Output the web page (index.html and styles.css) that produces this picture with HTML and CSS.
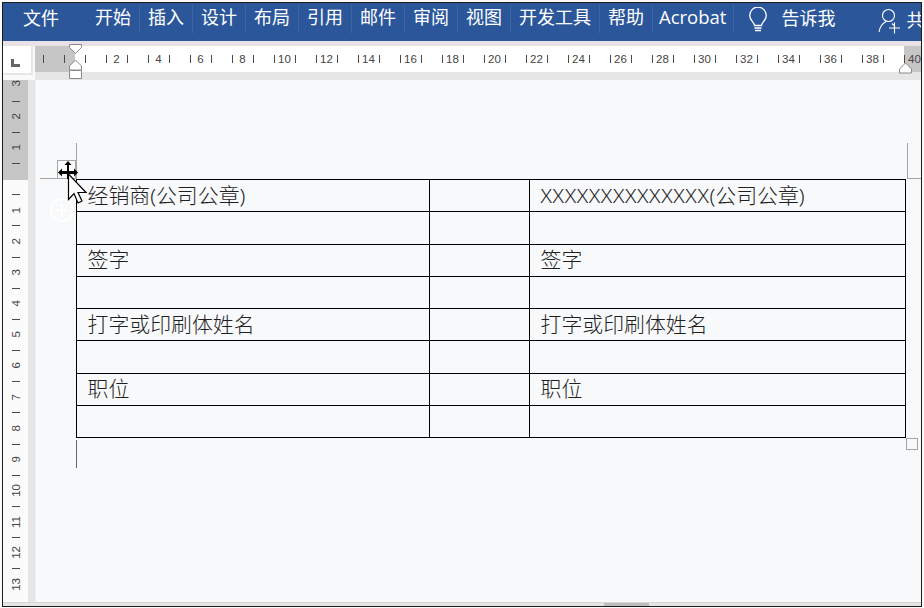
FILE: index.html
```html
<!DOCTYPE html>
<html lang="zh-CN">
<head>
<meta charset="utf-8">
<title>Word</title>
<link rel="stylesheet" href="styles.css">
</head>
<body>
<div class="frame">
  <header class="ribbon">
    <span class="file-tab">文件</span>
    <span class="tab">开始</span>
    <span class="tab">插入</span>
    <span class="tab">设计</span>
    <span class="tab">布局</span>
    <span class="tab">引用</span>
    <span class="tab">邮件</span>
    <span class="tab">审阅</span>
    <span class="tab">视图</span>
    <span class="tab">开发工具</span>
    <span class="tab">帮助</span>
    <span class="tab tab-latin">Acrobat</span>
    <svg class="bulb" width="20" height="26" viewBox="0 0 20 26" fill="none" stroke="#fff" stroke-width="1.3">
      <path d="M6.5 18.5c0-3-4.800-4.800-4.800-10a8.200 8.200 0 0 1 16.600 0c0 5.200-4.800 7-4.800 10z"/>
      <path d="M6.500 21h7M7 23.500h6"/>
    </svg>
    <span class="tell">告诉我</span>
    <svg class="user" width="24" height="26" viewBox="0 0 24 26" fill="none" stroke="#fff" stroke-width="1.100">
      <circle cx="10.500" cy="7.500" r="6"/>
      <path d="M1 24c1-5.500 4-9 7-10.500M14 15.500l2 2M11 20h11M16.500 14.500v11"/>
    </svg>
    <span class="share">共</span>
  </header>
  <div class="ribbon-edge"></div>
  <main class="work">
    <div class="corner"><span class="tab-stop"></span></div>
    <div class="hruler-wrap">
      <div class="hruler">
        <span class="hc"></span><span class="hc"></span><span class="hc"></span>
        <span class="hc">2</span><span class="hc"></span>
        <span class="hc">4</span><span class="hc"></span>
        <span class="hc">6</span><span class="hc"></span>
        <span class="hc">8</span><span class="hc"></span>
        <span class="hc">10</span><span class="hc"></span>
        <span class="hc">12</span><span class="hc"></span>
        <span class="hc">14</span><span class="hc"></span>
        <span class="hc">16</span><span class="hc"></span>
        <span class="hc">18</span><span class="hc"></span>
        <span class="hc">20</span><span class="hc"></span>
        <span class="hc">22</span><span class="hc"></span>
        <span class="hc">24</span><span class="hc"></span>
        <span class="hc">26</span><span class="hc"></span>
        <span class="hc">28</span><span class="hc"></span>
        <span class="hc">30</span><span class="hc"></span>
        <span class="hc">32</span><span class="hc"></span>
        <span class="hc">34</span><span class="hc"></span>
        <span class="hc">36</span><span class="hc"></span>
        <span class="hc">38</span><span class="hc"></span>
        <span class="hc">40</span>
      </div>
      <svg class="indent-left" width="15" height="38" viewBox="0 0 15 38" fill="#fff" stroke="#8a8a8a">
        <path d="M1.500 1.500h12v3l-6 6-6-6z"/>
        <path d="M7.500 17l6 6v4h-12v-4z"/>
        <path d="M1.500 27.500h12v8h-12z"/>
      </svg>
      <svg class="indent-right" width="15" height="12" viewBox="0 0 15 12" fill="#fff" stroke="#8a8a8a">
        <path d="M7.500 1l6 6v4h-12v-4z"/>
      </svg>
    </div>
    <aside class="vside">
      <div class="vruler">
        <span class="vc vc-first"><b>3</b></span>
        <span class="vc"><b>2</b></span>
        <span class="vc"><b>1</b></span>
        <span class="vc"></span>
        <span class="vc"><b>1</b></span>
        <span class="vc"><b>2</b></span>
        <span class="vc"><b>3</b></span>
        <span class="vc"><b>4</b></span>
        <span class="vc"><b>5</b></span>
        <span class="vc"><b>6</b></span>
        <span class="vc"><b>7</b></span>
        <span class="vc"><b>8</b></span>
        <span class="vc"><b>9</b></span>
        <span class="vc"><b>10</b></span>
        <span class="vc"><b>11</b></span>
        <span class="vc"><b>12</b></span>
        <span class="vc"><b>13</b></span>
      </div>
      <div class="vband"></div>
    </aside>
    <section class="doc">
      <table class="sign">
        <colgroup><col class="c1"><col class="c2"><col class="c3"></colgroup>
        <tr><td>经销商(公司公章)</td><td></td><td><span class="xs">XXXXXXXXXXXXXX</span>(公司公章)</td></tr>
        <tr><td></td><td></td><td></td></tr>
        <tr><td>签字</td><td></td><td>签字</td></tr>
        <tr><td></td><td></td><td></td></tr>
        <tr><td>打字或印刷体姓名</td><td></td><td>打字或印刷体姓名</td></tr>
        <tr><td></td><td></td><td></td></tr>
        <tr><td>职位</td><td></td><td>职位</td></tr>
        <tr><td></td><td></td><td></td></tr>
      </table>
      <i class="mark mark-tl-v"></i>
      <i class="mark mark-tl-h"></i>
      <i class="mark mark-tr-v"></i>
      <i class="mark mark-tr-h"></i>
      <i class="mark mark-bl-v"></i>
      <i class="handle-move"></i>
      <i class="handle-size"></i>
      <svg class="ghost" width="26" height="26" viewBox="0 0 26 26" fill="none" stroke="#fff" stroke-width="2">
        <circle cx="13" cy="13" r="11"/>
        <path d="M13 7v12M7 13h12"/>
      </svg>
      <svg class="cursor" width="32" height="50" viewBox="0 0 32 50">
        <path d="M12 1l-3.500 4h2.500v6h-5v-2.500l-4 4 4 4v-2.500h5v5h2v-5h5v2.500l4-4-4-4v2.500h-5v-6h2.500z" fill="#000"/>
        <path d="M12.500 14v25.500l5.500-6 4 9.500 4-2-4-8.500h8z" fill="#fff" stroke="#000" stroke-width="1.200"/>
      </svg>
    </section>
  </main>
  <footer class="hscroll"><span class="thumb"></span></footer>
</div>
</body>
</html>
```
FILE: styles.css
```css
* { box-sizing: border-box; }
html, body { margin: 0; padding: 0; }
body {
  width: 924px;
  height: 608px;
  padding: 2px 2px 1px 2px;
  background: #fafafa;
  overflow: hidden;
  font-family: "Noto Sans", "Noto Sans CJK SC", sans-serif;
}
.frame {
  width: 920px;
  height: 605px;
  border: 1px solid #1c1c1c;
  background: #f8f9fb;
  display: flex;
  flex-direction: column;
  overflow: hidden;
}
.ribbon {
  flex: 0 0 38px;
  height: 38px;
  min-height: 0;
  background: #2b579a;
  color: #fff;
  display: flex;
  align-items: center;
  font-size: 18px;
  line-height: 30px;
  white-space: nowrap;
  overflow: hidden;
}
.ribbon > * { flex: none; }
.file-tab { width: 84px; padding-left: 20px; margin-top: -8px; }
.tab {
  padding: 0 8px;
  border-right: 1px solid #3d68a8;
  height: 28px;
  line-height: 24px;
  margin-top: -6px;
}
.tab-latin { padding: 0 7px 0 6px; font-family: "Open Sans", sans-serif; font-size: 18.500px; font-weight: 500; }
.bulb { margin-left: 14px; margin-top: -4px; }
.tell { margin-left: 13px; margin-top: -8px; }
.user { margin-left: 43px; margin-top: -2px; }
.share { margin-left: 4px; margin-top: -4px; }
.ribbon-edge { flex: 0 0 5px; background: #e8e2e6; }
.work {
  flex: 1;
  min-height: 0;
  display: grid;
  grid-template-columns: 32px 1fr;
  grid-template-rows: 34px 1fr;
}
.corner {
  height: 29px;
  margin-right: 2px;
  padding: 7px 0 0 8px;
  border-right: 2px solid #e6e6e6;
  border-bottom: 2px solid #e6e6e6;
  display: flex;
  align-items: center;
  background: #fff;
}
.tab-stop {
  width: 9px;
  height: 8px;
  border-left: 3px solid #666;
  border-bottom: 3px solid #666;
}
.hruler-wrap {
  position: relative;
  background: #e6e6e6;
}
.hruler {
  height: 26px;
  padding-left: 8px;
  display: flex;
  overflow: hidden;
  background: linear-gradient(to right, #c6c6c6 40px, #fff 40px, #fff 869px, #c6c6c6 869px);
  font-family: "Liberation Sans", sans-serif;
  font-size: 11.500px;
  color: #444;
}
.hc {
  flex: 0 0 21px;
  height: 26px;
  line-height: 26px;
  text-align: center;
  background: linear-gradient(#4a4a4a, #4a4a4a) left center / 1px 8px no-repeat;
}
.indent-left { position: absolute; left: 33px; top: -3px; }
.indent-right { position: absolute; left: 863px; top: 16px; }
.vside { display: flex; min-height: 0; overflow: hidden; }
.vruler {
  flex: 0 0 25px;
  background: linear-gradient(to bottom, #c6c6c6 100px, #fbfbfb 100px);
  display: flex;
  flex-direction: column;
  font-family: "Liberation Sans", sans-serif;
  font-size: 11.500px;
  color: #444;
  overflow: hidden;
}
.vc {
  flex: 0 0 31.200px;
  display: flex;
  align-items: center;
  justify-content: center;
  background: linear-gradient(#4a4a4a, #4a4a4a) center top / 8px 1px no-repeat;
}
.vc-first { flex-basis: 20.600px; background: none; align-items: flex-start; }
.vc b {
  font-weight: 400;
  writing-mode: vertical-rl;
  transform: rotate(180deg);
  line-height: 14px;
}
.vband { flex: 0 0 7px; background: #e6e6e6; }
.doc {
  position: relative;
  min-height: 0;
  padding: 99px 0 0 40px;
  background: #f8f9fb;
  border-left: 1px solid #efefef;
}
.sign {
  width: 830px;
  height: 259px;
  border-collapse: collapse;
  table-layout: fixed;
  font-size: 20.900px;
  color: #1f1f1f;
  font-weight: 300;
}
.c1 { width: 353px; }
.c2 { width: 100px; }
.sign td {
  border: 1px solid #000;
  height: 32.200px;
  padding: 0 0 2px 10.500px;
  line-height: 28px;
  white-space: nowrap;
  overflow: hidden;
}
.xs { letter-spacing: .62px; }
.mark { position: absolute; display: block; background: #a5a5a5; }
.mark-tl-v { left: 40px; top: 63px; width: 1px; height: 36px; }
.mark-tl-h { left: 4px; top: 98px; width: 36px; height: 1px; }
.mark-tr-v { left: 871px; top: 63px; width: 1px; height: 36px; }
.mark-tr-h { left: 871px; top: 98px; width: 14px; height: 1px; }
.mark-bl-v { left: 40px; top: 360px; width: 1px; height: 28px; background: #666; }
.handle-move {
  position: absolute;
  display: block;
  left: 21px;
  top: 80px;
  width: 19px;
  height: 19px;
  border: 1px solid #a5a5a5;
}
.handle-size {
  position: absolute;
  display: block;
  left: 870px;
  top: 358px;
  width: 12px;
  height: 12px;
  border: 1px solid #a5a5a5;
}
.ghost { position: absolute; left: 13px; top: 117px; }
.cursor { position: absolute; left: 20px; top: 80px; }
.hscroll {
  flex: 0 0 4px;
  margin-top: -4px;
  position: relative;
  background: #e4e4e4;
  border-top: 1px solid #d6d6d6;
  padding-left: 601px;
  display: flex;
}
.thumb { width: 45px; background: #bdbdbd; }
```
